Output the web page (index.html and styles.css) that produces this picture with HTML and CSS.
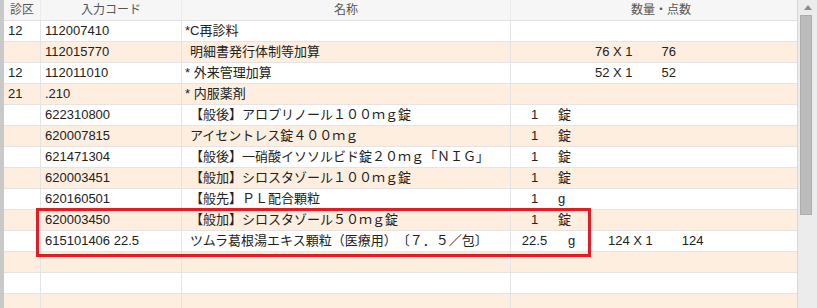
FILE: index.html
```html
<!DOCTYPE html>
<html lang="ja">
<head>
    <meta charset="UTF-8">
    <title>入力明細</title>
    <link rel="stylesheet" href="styles.css">
</head>
<body>
    <div class="frame">
        <div class="edge"></div>
        <div class="list">
            <div class="row head">
                <div class="cell">診区</div>
                <div class="cell">入力コード</div>
                <div class="cell">名称</div>
                <div class="cell amount">数量・点数</div>
            </div>
            <div class="row">
                <div class="cell">12</div>
                <div class="cell">112007410</div>
                <div class="cell">*C再診料</div>
                <div class="cell qty"></div>
            </div>
            <div class="row alt">
                <div class="cell"></div>
                <div class="cell">112015770</div>
                <div class="cell sub">明細書発行体制等加算</div>
                <div class="cell qty"><span class="calc only">76 X 1</span><span class="total">76</span></div>
            </div>
            <div class="row">
                <div class="cell">12</div>
                <div class="cell">112011010</div>
                <div class="cell">* 外来管理加算</div>
                <div class="cell qty"><span class="calc only">52 X 1</span><span class="total">52</span></div>
            </div>
            <div class="row alt">
                <div class="cell">21</div>
                <div class="cell">.210</div>
                <div class="cell">* 内服薬剤</div>
                <div class="cell qty"></div>
            </div>
            <div class="row">
                <div class="cell"></div>
                <div class="cell">622310800</div>
                <div class="cell sub">【般後】アロプリノール１００ｍｇ錠</div>
                <div class="cell qty"><span class="num">1</span><span class="unit">錠</span></div>
            </div>
            <div class="row alt">
                <div class="cell"></div>
                <div class="cell">620007815</div>
                <div class="cell sub">アイセントレス錠４００ｍｇ</div>
                <div class="cell qty"><span class="num">1</span><span class="unit">錠</span></div>
            </div>
            <div class="row">
                <div class="cell"></div>
                <div class="cell">621471304</div>
                <div class="cell sub">【般後】一硝酸イソソルビド錠２０ｍｇ「ＮＩＧ」</div>
                <div class="cell qty"><span class="num">1</span><span class="unit">錠</span></div>
            </div>
            <div class="row alt">
                <div class="cell"></div>
                <div class="cell">620003451</div>
                <div class="cell sub">【般加】シロスタゾール１００ｍｇ錠</div>
                <div class="cell qty"><span class="num">1</span><span class="unit">錠</span></div>
            </div>
            <div class="row">
                <div class="cell"></div>
                <div class="cell">620160501</div>
                <div class="cell sub">【般先】ＰＬ配合顆粒</div>
                <div class="cell qty"><span class="num">1</span><span class="unit">g</span></div>
            </div>
            <div class="row alt">
                <div class="cell"></div>
                <div class="cell">620003450</div>
                <div class="cell sub">【般加】シロスタゾール５０ｍｇ錠</div>
                <div class="cell qty"><span class="num">1</span><span class="unit">錠</span></div>
            </div>
            <div class="row">
                <div class="cell"></div>
                <div class="cell">615101406 22.5</div>
                <div class="cell sub">ツムラ葛根湯エキス顆粒（医療用）〔７．５／包〕</div>
                <div class="cell qty"><span class="num">22.5</span><span class="unit gram">g</span><span class="calc">124 X 1</span><span class="total">124</span></div>
            </div>
            <div class="row alt">
                <div class="cell"></div><div class="cell"></div><div class="cell"></div><div class="cell"></div>
            </div>
            <div class="row">
                <div class="cell"></div><div class="cell"></div><div class="cell"></div><div class="cell"></div>
            </div>
            <div class="row alt">
                <div class="cell"></div><div class="cell"></div><div class="cell"></div><div class="cell"></div>
            </div>
            <div class="mark"></div>
        </div>
        <div class="scroll">
            <div class="arrow"></div>
            <div class="thumb"></div>
        </div>
    </div>
</body>
</html>
```

FILE: styles.css
```css
body { margin: 0; font-family: "Liberation Sans", "Noto Sans CJK JP", sans-serif; font-size: 13px; color: #222; background: #fff; text-spacing-trim: space-all; }

.frame { display: flex; height: 308px; overflow: hidden; }
.edge { width: 4px; background: #c9c9c9; flex: none; }
.list { position: relative; flex: 1; }

.row { display: grid; grid-template-columns: 37px 141px 329px 1fr; height: 21px; box-sizing: border-box; border-bottom: 1px solid #e4e4e4; background: #fff; }
.row.alt { background: #fdeee0; }
.cell { border-right: 1px solid #e4e4e4; padding-left: 4px; line-height: 20px; white-space: nowrap; overflow: hidden; }
.cell:nth-child(3) { padding-left: 3px; }
.cell:last-child { border-right: none; }
.cell.sub { padding-left: 8px; }

.head { background: #f6f6f6; border-bottom-color: #e2e2e2; }
.head .cell { text-align: center; font-size: 12px; color: #555; padding-left: 0; line-height: 20px; border-right-color: #ececec; }
.head .amount { padding-left: 14px; }

.qty { display: flex; padding-left: 0; }
.num { width: 47px; text-align: center; }
.unit { width: 30px; }
.unit.gram { padding-left: 10px; width: 20px; }
.calc { margin-left: 20px; }
.calc.only { margin-left: 84px; }
.total { margin-left: 29px; }

.mark { position: absolute; left: 32px; top: 208px; width: 549px; height: 43px; border: 3px solid #e41c24; }

.scroll { width: 19px; flex: none; background: #ececec; border-left: 1px solid #d8d8d8; position: relative; }
.arrow { width: 0; height: 0; margin: 5px auto 0; border-left: 4px solid transparent; border-right: 4px solid transparent; border-bottom: 5px solid #8c8c8c; }
.thumb { margin: 5px 5px 0 2px; height: 198px; background: #bcbcbc; border: 1px solid #adadad; }
```
